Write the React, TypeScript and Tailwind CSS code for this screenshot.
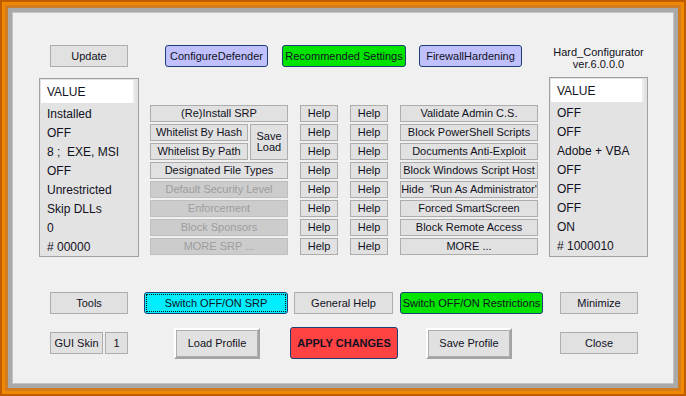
import clsx from 'clsx';
import { ReactNode } from 'react';

interface BtnProps {
  children: ReactNode;
  className?: string;
  disabled?: boolean;
}

function Btn({ children, className, disabled }: BtnProps) {
  return (
    <div
      className={clsx(
        'flex items-center justify-center border text-[11px] leading-none whitespace-nowrap',
        disabled
          ? 'bg-[#cccccc] border-[#bfbfbf] text-[#9d9d9d]'
          : 'bg-[#e1e1e1] border-[#adadad] text-[#111122]',
        className
      )}
    >
      {children}
    </div>
  );
}

function ColorBtn({ children, className }: { children: ReactNode; className: string }) {
  return (
    <div
      className={clsx(
        'flex items-center justify-center border border-[#1d3f74] rounded-[3px] text-[11px] leading-none text-[#111122] whitespace-nowrap',
        className
      )}
    >
      {children}
    </div>
  );
}

function ProfileBtn({ children }: { children: ReactNode }) {
  return (
    <div className="w-[86px] h-[31px] border-2 border-t-white border-l-white border-r-[#a3a3a3] border-b-[#a3a3a3] flex">
      <Btn className="flex-1 text-[11.5px]">{children}</Btn>
    </div>
  );
}

function ValueList({ rows, className }: { rows: string[]; className?: string }) {
  return (
    <div className={clsx('w-full border border-[#a0a0a0] bg-[#e3e3e3] p-[1px]', className)}>
      <div className="h-[23px] bg-white flex items-center pl-[6px] mr-[2px] border-r-2 border-[#ededed] text-[12px] text-[#111122]">
        VALUE
      </div>
      <div className="pt-[1px]">
        {rows.map((r, i) => (
          <div key={i} className="h-[19px] flex items-center pl-[6px] text-[12px] text-[#111122] whitespace-pre">
            {r}
          </div>
        ))}
      </div>
    </div>
  );
}

const leftRows = ['Installed', 'OFF', '8 ;  EXE, MSI', 'OFF', 'Unrestricted', 'Skip DLLs', '0', '# 00000'];
const rightRows = ['OFF', 'OFF', 'Adobe + VBA', 'OFF', 'OFF', 'OFF', 'ON', '# 1000010'];
const rightBtns = [
  'Validate Admin C.S.',
  'Block PowerShell Scripts',
  'Documents Anti-Exploit',
  'Block Windows Script Host',
  "Hide  'Run As Administrator'",
  'Forced SmartScreen',
  'Block Remote Access',
  'MORE ...',
];

export default function App() {
  return (
    <div className="w-[686px] h-[396px] font-['Liberation_Sans',Arial,sans-serif] border-[2px] border-[#c05c00]">
      <div className="w-full h-full border-[3px] border-[#f08800]">
        <div className="w-full h-full border-[3px] border-[#d27c22]">
          <div className="w-full h-full border-[4px] border-[#a9a9a9]">
            <div className="w-full h-full border-[1px] border-[#c4c4c4] bg-[#f0f0f0] pt-[32px] pl-[26px]">
              {/* top + middle */}
              <div className="flex">
                <div className="w-[100px] flex flex-col">
                  <div className="flex justify-center">
                    <Btn className="w-[78px] h-[22px] text-[11.5px]">Update</Btn>
                  </div>
                  <ValueList rows={leftRows} className="mt-[11px] h-[179px]" />
                </div>

                <div className="ml-[11px] w-[388px]">
                  <div className="flex pl-[15px]">
                    <ColorBtn className="w-[103px] h-[22px] bg-[#c0c0ff]">ConfigureDefender</ColorBtn>
                    <ColorBtn className="ml-[14px] w-[124px] h-[22px] bg-[#00e400]">Recommended Settings</ColorBtn>
                    <ColorBtn className="ml-[13px] w-[103px] h-[22px] bg-[#c0c0ff]">FirewallHardening</ColorBtn>
                  </div>
                  <div className="mt-[38px] flex gap-[12px]">
                    <div className="w-[138px] grid grid-cols-[98px_38px] auto-rows-[17px] gap-[2px]">
                      <Btn className="col-span-2">(Re)Install SRP</Btn>
                      <Btn>Whitelist By Hash</Btn>
                      <Btn className="row-span-2 flex-col leading-[13px]">
                        <span>Save</span>
                        <span>Load</span>
                      </Btn>
                      <Btn>Whitelist By Path</Btn>
                      <Btn className="col-span-2">Designated File Types</Btn>
                      <Btn className="col-span-2" disabled>Default Security Level</Btn>
                      <Btn className="col-span-2" disabled>Enforcement</Btn>
                      <Btn className="col-span-2" disabled>Block Sponsors</Btn>
                      <Btn className="col-span-2" disabled>MORE SRP ...</Btn>
                    </div>
                    {[0, 1].map((c) => (
                      <div key={c} className="w-[38px] flex flex-col gap-[2px]">
                        {rightBtns.map((_, i) => (
                          <Btn key={i} className="h-[17px]">Help</Btn>
                        ))}
                      </div>
                    ))}
                    <div className="w-[138px] flex flex-col gap-[2px]">
                      {rightBtns.map((t) => (
                        <Btn key={t} className="h-[17px] whitespace-pre">{t}</Btn>
                      ))}
                    </div>
                  </div>
                </div>

                <div className="ml-[11px] w-[99px] flex flex-col">
                  <div className="pt-[1px] text-center text-[11px] leading-[12px] text-[#111122]">
                    <div>Hard_Configurator</div>
                    <div>ver.6.0.0.0</div>
                  </div>
                  <ValueList rows={rightRows} className="mt-[7px] h-[180px]" />
                </div>
              </div>

              {/* bottom row 1 */}
              <div className="mt-[35px] ml-[11px] flex h-[22px]">
                <Btn className="w-[78px] text-[11.5px]">Tools</Btn>
                <ColorBtn className="ml-[16px] w-[144px] bg-[#00efff] p-[1px] text-[11.5px]">
                  <div className="w-full h-full border border-dotted border-[#111111] flex items-center justify-center">
                    Switch OFF/ON SRP
                  </div>
                </ColorBtn>
                <Btn className="ml-[6px] w-[99px] text-[11.5px]">General Help</Btn>
                <ColorBtn className="ml-[7px] w-[143px] bg-[#00e400]">Switch OFF/ON Restrictions</ColorBtn>
                <Btn className="ml-[17px] w-[78px] text-[11.5px]">Minimize</Btn>
              </div>

              {/* bottom row 2 */}
              <div className="mt-[13px] ml-[11px] flex items-center h-[32px]">
                <Btn className="w-[53px] h-[22px] text-[11.5px]">GUI Skin</Btn>
                <Btn className="ml-[2px] w-[23px] h-[22px] text-[11.5px]">1</Btn>
                <div className="ml-[46px]">
                  <ProfileBtn>Load Profile</ProfileBtn>
                </div>
                <ColorBtn className="ml-[30px] w-[108px] h-[32px] bg-[#ff4242] font-bold text-[11px] text-[#111111]">
                  APPLY CHANGES
                </ColorBtn>
                <div className="ml-[28px]">
                  <ProfileBtn>Save Profile</ProfileBtn>
                </div>
                <Btn className="ml-[48px] w-[78px] h-[22px] text-[11.5px]">Close</Btn>
              </div>
            </div>
          </div>
        </div>
      </div>
    </div>
  );
}
